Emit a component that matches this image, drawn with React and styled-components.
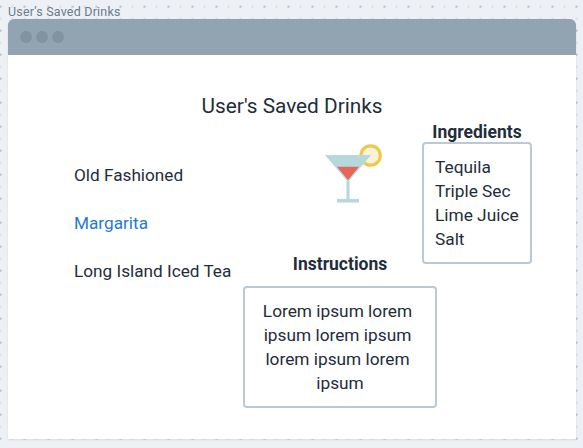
import React from "react"
import styled, { createGlobalStyle } from "styled-components"

const GlobalStyle = createGlobalStyle`
  html, body {
    margin: 0;
    padding: 0;
  }
  body {
    width: 583px;
    height: 448px;
    overflow: hidden;
    font-family: "Roboto", "Liberation Sans", sans-serif;
    background-color: #edf0f5;
    background-image:
      radial-gradient(circle, #bcc5d1 0.8px, transparent 1.1px),
      radial-gradient(circle, #d8dde5 0.8px, transparent 1.1px);
    background-size: 24px 24px, 12px 12px;
    background-position: -11.5px -5.3px, -5.5px 0.7px;
  }
`

const Page = styled.div`
  display: flex;
  flex-direction: column;
  padding: 4px 7px 0 8px;
`

const Caption = styled.div`
  height: 15px;
  font-size: 12.5px;
  line-height: 15px;
  letter-spacing: 0.2px;
  color: #6b7b8a;
`

const Window = styled.div`
  height: 420px;
  background: #fff;
  border-radius: 6px 6px 0 0;
  box-shadow: 0 1px 2px rgba(120, 135, 150, 0.2);
  overflow: hidden;
`

const TitleBar = styled.div`
  display: flex;
  align-items: center;
  gap: 4px;
  height: 36px;
  padding-left: 12px;
  background: #92a3b1;
`

const Dot = styled.span`
  width: 12px;
  height: 12px;
  border-radius: 50%;
  background: #82929f;
`

const Title = styled.h1`
  margin: 39px 0 0;
  font-size: 20.8px;
  font-weight: 400;
  line-height: 24px;
  text-align: center;
  color: #1f2d3a;
`

const Content = styled.div`
  display: flex;
  padding: 4px 0 0 66px;
`

const DrinkList = styled.ul`
  width: 169px;
  margin: 0;
  padding: 41px 0 0;
  list-style: none;
`

const Drink = styled.li`
  height: 48px;
  font-size: 17.2px;
  line-height: 24px;
  white-space: nowrap;
  color: ${props => (props.$active ? "#1f7ad1" : "#1f2d3a")};
`

const Middle = styled.div`
  display: flex;
  flex-direction: column;
  width: 194px;
`

const Glass = styled.svg`
  display: block;
  width: 64px;
  height: 64px;
  margin: 18px 0 0 77px;
`

const Heading = styled.h2`
  margin: 0;
  font-size: 17.5px;
  font-weight: 700;
  line-height: 20px;
  text-align: center;
  color: #1f2d3a;
`

const Instructions = styled.div`
  display: flex;
  flex-direction: column;
  gap: 12px;
  margin-top: 50px;
`

const Box = styled.div`
  box-sizing: border-box;
  height: 122px;
  border: 2px solid #bcc8d4;
  border-radius: 4px;
  font-size: 17.3px;
  line-height: 24px;
  color: #1f2d3a;
`

const InstructionsBox = styled(Box)`
  padding: 11px 0;
  text-align: center;
`

const LoremLine = styled.div`
  padding-right: ${props => (props.$last ? 0 : 5)}px;
  white-space: nowrap;
`

const Side = styled.div`
  display: flex;
  flex-direction: column;
  width: 110px;
  margin-left: -15px;
`

const IngredientsBox = styled(Box)`
  padding: 11px 11px;
`

const Ingredient = styled.div`
  white-space: nowrap;
`

const drinks = ["Old Fashioned", "Margarita", "Long Island Iced Tea"]
const ingredients = ["Tequila", "Triple Sec", "Lime Juice", "Salt"]
const lorem = ["Lorem ipsum lorem", "ipsum lorem ipsum", "lorem ipsum lorem", "ipsum"]

export default function App() {
  return (
    <Page>
      <GlobalStyle />
      <Caption>User's Saved Drinks</Caption>
      <Window>
        <TitleBar>
          <Dot />
          <Dot />
          <Dot />
        </TitleBar>
        <Title>User's Saved Drinks</Title>
        <Content>
          <DrinkList>
            {drinks.map(name => (
              <Drink key={name} $active={name === "Margarita"}>{name}</Drink>
            ))}
          </DrinkList>
          <Middle>
            <Glass viewBox="0 0 64 64">
              <circle cx="50.6" cy="15.5" r="9.7" fill="#fbf3d5" stroke="#efc94c" strokeWidth="3.2" />
              <polygon points="5,15 51,15 28,42" fill="#b5d8dc" />
              <polygon points="17,26.8 39,26.8 28,40" fill="#e8655a" />
              <rect x="26.5" y="41" width="3" height="19" fill="#b5d8dc" />
              <rect x="17" y="59" width="22" height="3.5" fill="#b5d8dc" />
            </Glass>
            <Instructions>
              <Heading>Instructions</Heading>
              <InstructionsBox>
                {lorem.map((line, i) => (
                  <LoremLine key={i} $last={i === lorem.length - 1}>{line}</LoremLine>
                ))}
              </InstructionsBox>
            </Instructions>
          </Middle>
          <Side>
            <Heading>Ingredients</Heading>
            <IngredientsBox>
              {ingredients.map(item => (
                <Ingredient key={item}>{item}</Ingredient>
              ))}
            </IngredientsBox>
          </Side>
        </Content>
      </Window>
    </Page>
  )
}
